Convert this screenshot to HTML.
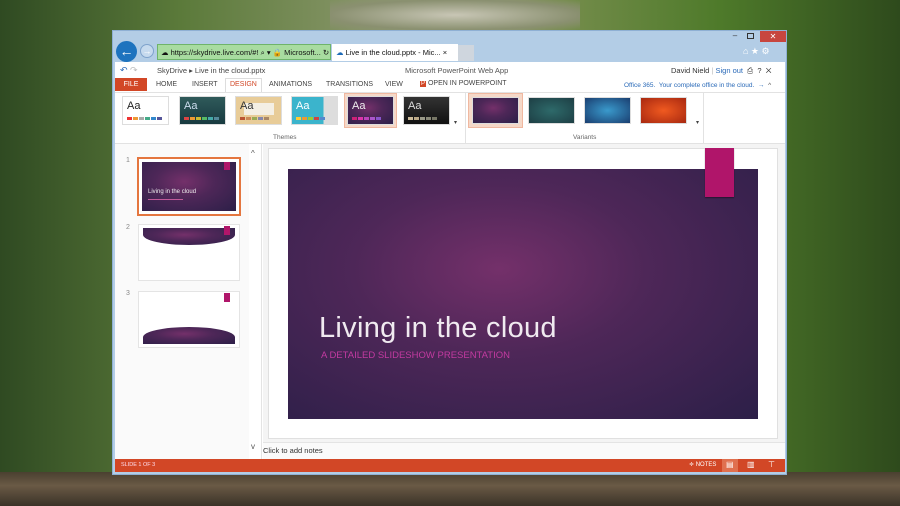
<!DOCTYPE html>
<html><head><meta charset="utf-8"><style>
*{margin:0;padding:0;box-sizing:border-box}
body{width:900px;height:506px;overflow:hidden;position:relative;font-family:"Liberation Sans",sans-serif;
background:linear-gradient(90deg,#2f4a22 0%,#5b7a3a 20%,#8f9a70 45%,#a9a890 50%,#7a8f50 60%,#4e7a2a 80%,#2e4a1c 100%);}
.bg2{position:absolute;left:0;right:0;bottom:0;height:34px;background:linear-gradient(180deg,#4a4030,#6a5a45 40%,#3a3228);}
.bgtop{position:absolute;left:330px;top:0;width:250px;height:30px;background:radial-gradient(ellipse at center,#c8c6b5,#8a9070 70%,transparent);}
.win{position:absolute;left:112px;top:30px;width:675px;height:445px;background:#b3cde6;border:1px solid #8fb0d4}
.abs{position:absolute}
.t{position:absolute;white-space:nowrap;font-size:7px;color:#444}
.th{position:absolute;top:65px;width:47px;height:29px;border:1px solid #ddd;overflow:hidden}
.sw{position:absolute;bottom:4px;left:4px;display:flex;gap:1px}
.sw i{display:block;width:5px;height:3px}
.slide{background:radial-gradient(ellipse at 45% 40%,#74306a 0%,#4e2758 40%,#2c1f48 100%)}
</style></head><body>
<div class="bgtop"></div><div class="bg2"></div>
<div class="win">
 <div class="abs" style="left:612px;top:0;width:20px;height:10px;font-size:8px;color:#333;text-align:center">‒</div>
 <div class="abs" style="left:634px;top:2px;width:7px;height:6px;border:1px solid #333"></div>
 <div class="abs" style="left:647px;top:0;width:26px;height:11px;background:#c7463f;color:#fff;font-size:8px;text-align:center;line-height:11px">✕</div>
 <div class="t" style="left:630px;top:15px;font-size:9px;color:#fff">⌂ ★ ⚙</div>
 <div class="abs" style="left:3px;top:10px;width:21px;height:21px;border-radius:50%;background:#1e73be;color:#fff;font-size:14px;text-align:center;line-height:20px;font-weight:bold">←</div>
 <div class="abs" style="left:27px;top:13px;width:14px;height:14px;border-radius:50%;border:1px solid #7fa3cc;background:#c6daee;color:#fff;font-size:9px;text-align:center;line-height:12px">→</div>
 <div class="abs" style="left:44px;top:13px;width:174px;height:16px;background:#a8dca0;border:1px solid #6fb46a"></div>
 <div class="t" style="left:48px;top:17px;font-size:7.5px;color:#111">☁ https://skydrive.live.com/#! ⌕ ▾ 🔒 Microsoft... ↻</div>
 <div class="abs" style="left:219px;top:13px;width:126px;height:17px;background:#fff"></div>
 <div class="t" style="left:223px;top:17px;font-size:7.5px;color:#111"><span style="color:#1e6bb8">☁</span> Live in the cloud.pptx - Mic... ×</div>
 <div class="abs" style="left:345px;top:14px;width:16px;height:16px;background:#cfd6de"></div>
 <div class="abs" style="left:2px;top:31px;width:670px;height:410px;background:#fff"></div>
 <div class="t" style="left:7px;top:34px;font-size:9px;color:#2a6ab8">↶ <span style="color:#bbb">↷</span></div>
 <div class="t" style="left:44px;top:35px;font-size:7.5px">SkyDrive ▸ Live in the cloud.pptx</div>
 <div class="t" style="left:292px;top:35px;font-size:7.5px;color:#555">Microsoft PowerPoint Web App</div>
 <div class="t" style="left:558px;top:35px;font-size:7.5px;color:#333">David Nield <span style="color:#bbb">|</span> <span style="color:#2a6ab8">Sign out</span> &nbsp;⎙ &nbsp;? &nbsp;✕</div>
 <div class="abs" style="left:2px;top:47px;width:32px;height:13px;background:#d24726;color:#fff;font-size:7px;text-align:center;line-height:13px">FILE</div>
 <div class="t" style="left:43px;top:50px">HOME</div>
 <div class="t" style="left:79px;top:50px">INSERT</div>
 <div class="abs" style="left:112px;top:47px;width:37px;height:14px;border:1px solid #ddd;border-bottom:none;background:#fff"></div>
 <div class="t" style="left:117px;top:50px;color:#d24726">DESIGN</div>
 <div class="t" style="left:156px;top:50px">ANIMATIONS</div>
 <div class="t" style="left:213px;top:50px">TRANSITIONS</div>
 <div class="t" style="left:272px;top:50px">VIEW</div>
 <div class="t" style="left:307px;top:49px"><span style="background:#d24726;color:#fff;font-size:6px;padding:0 1px">P</span> OPEN IN POWERPOINT</div>
 <div class="t" style="left:511px;top:51px;font-size:6.5px;color:#2a6ab8">Office 365. &nbsp;Your complete office in the cloud. &nbsp;→ &nbsp;<span style="color:#555">^</span></div>
 <div class="abs" style="left:2px;top:61px;width:670px;height:1px;background:#e2e2e2"></div>
 <div class="th" style="left:9px;background:#fff"><span class="t" style="left:4px;top:3px;font-size:11px;color:#222">Aa</span><div class="sw"><i style="background:#e33"></i><i style="background:#e93"></i><i style="background:#aaa"></i><i style="background:#4a8"></i><i style="background:#38c"></i><i style="background:#559"></i></div></div>
 <div class="th" style="left:66px;background:linear-gradient(#2f5a5a,#183a40)"><span class="t" style="left:4px;top:3px;font-size:11px;color:#cde">Aa</span><div class="sw"><i style="background:#d44"></i><i style="background:#e93"></i><i style="background:#cb3"></i><i style="background:#5b6"></i><i style="background:#4aa"></i><i style="background:#589"></i></div></div>
 <div class="th" style="left:122px;background:#e8cc98"><div class="abs" style="left:8px;top:6px;width:30px;height:12px;background:#f4efe4"></div><span class="t" style="left:4px;top:3px;font-size:11px;color:#333">Aa</span><div class="sw"><i style="background:#b53"></i><i style="background:#c85"></i><i style="background:#9a5"></i><i style="background:#88a"></i><i style="background:#a86"></i></div></div>
 <div class="th" style="left:178px;background:linear-gradient(90deg,#3bb4cc 70%,#ddd 70%)"><span class="t" style="left:4px;top:3px;font-size:11px;color:#fff">Aa</span><div class="sw"><i style="background:#fc3"></i><i style="background:#e93"></i><i style="background:#9c3"></i><i style="background:#c44"></i><i style="background:#58c"></i></div></div>
 <div class="abs" style="left:231px;top:62px;width:53px;height:35px;background:#f5d8c8;border:1px solid #f0b8a0"></div>
 <div class="th slide" style="left:234px"><span class="t" style="left:4px;top:3px;font-size:11px;color:#eee">Aa</span><div class="sw"><i style="background:#c27"></i><i style="background:#d3a"></i><i style="background:#b4b"></i><i style="background:#a5c"></i><i style="background:#85c"></i></div></div>
 <div class="th" style="left:290px;background:linear-gradient(#333,#111)"><span class="t" style="left:4px;top:3px;font-size:11px;color:#ddd">Aa</span><div class="sw"><i style="background:#cb9"></i><i style="background:#ba8"></i><i style="background:#998"></i><i style="background:#887"></i><i style="background:#776"></i></div></div>
 <div class="t" style="left:341px;top:88px;font-size:6px">▾</div>
 <div class="abs" style="left:352px;top:62px;width:1px;height:50px;background:#e2e2e2"></div>
 <div class="abs" style="left:355px;top:62px;width:55px;height:35px;background:#f5d8c8;border:1px solid #f0b8a0"></div>
 <div class="th slide" style="left:359px;top:66px;height:27px"></div>
 <div class="th" style="left:415px;top:66px;height:27px;background:radial-gradient(#2e6a6a,#1d3e44)"></div>
 <div class="th" style="left:471px;top:66px;height:27px;background:radial-gradient(#3a9acc,#1a3e70)"></div>
 <div class="th" style="left:527px;top:66px;height:27px;background:radial-gradient(#f05a20,#a82810)"></div>
 <div class="t" style="left:583px;top:88px;font-size:6px">▾</div>
 <div class="abs" style="left:590px;top:62px;width:1px;height:50px;background:#e2e2e2"></div>
 <div class="t" style="left:160px;top:103px;font-size:6.5px;color:#666">Themes</div>
 <div class="t" style="left:460px;top:103px;font-size:6.5px;color:#666">Variants</div>
 <div class="abs" style="left:2px;top:112px;width:670px;height:1px;background:#e2e2e2"></div>
 <div class="abs" style="left:2px;top:113px;width:134px;height:315px;background:#fafafa"></div>
 <div class="abs" style="left:136px;top:113px;width:13px;height:315px;background:#fff;border-right:1px solid #e4e4e4"></div>
 <div class="t" style="left:138px;top:118px;font-size:8px;color:#555">^</div>
 <div class="t" style="left:138px;top:411px;font-size:8px;color:#555">v</div>
 <div class="t" style="left:13px;top:126px;font-size:7px;color:#888">1</div>
 <div class="t" style="left:13px;top:193px;font-size:7px;color:#888">2</div>
 <div class="t" style="left:13px;top:259px;font-size:7px;color:#888">3</div>
 <div class="abs" style="left:24px;top:126px;width:104px;height:59px;border:2px solid #e4763f;background:#fff"></div>
 <div class="abs slide" style="left:29px;top:131px;width:94px;height:49px"></div>
 <div class="abs" style="left:111px;top:131px;width:6px;height:8px;background:#b0166a"></div>
 <div class="t" style="left:35px;top:158px;font-size:6px;color:#eee">Living in the cloud</div>
 <div class="abs" style="left:35px;top:168px;width:35px;height:1px;background:#c05a9a"></div>
 <div class="abs" style="left:25px;top:193px;width:102px;height:57px;border:1px solid #e4e4e4;background:#fff"></div>
 <div class="abs slide" style="left:30px;top:197px;width:92px;height:17px;border-radius:0 0 50% 50%/0 0 60% 60%"></div>
 <div class="abs" style="left:111px;top:195px;width:6px;height:9px;background:#b0166a"></div>
 <div class="abs" style="left:25px;top:260px;width:102px;height:57px;border:1px solid #e4e4e4;background:#fff"></div>
 <div class="abs slide" style="left:30px;top:296px;width:92px;height:17px;border-radius:50% 50% 0 0/60% 60% 0 0"></div>
 <div class="abs" style="left:111px;top:262px;width:6px;height:9px;background:#b0166a"></div>
 <div class="abs" style="left:150px;top:113px;width:522px;height:298px;background:#f4f4f4"></div>
 <div class="abs" style="left:155px;top:117px;width:510px;height:291px;background:#fff;border:1px solid #e0e0e0"></div>
 <div class="abs slide" style="left:175px;top:138px;width:470px;height:250px"></div>
 <div class="abs" style="left:592px;top:117px;width:29px;height:49px;background:#b0156a;box-shadow:0 1px 1px rgba(0,0,0,.4)"></div>
 <div class="t" style="left:206px;top:281px;font-size:29px;color:#f0eaf0;letter-spacing:0.3px">Living in the cloud</div>
 <div class="t" style="left:208px;top:319px;font-size:9.5px;color:#c23aa0">A DETAILED SLIDESHOW PRESENTATION</div>
 <div class="abs" style="left:150px;top:411px;width:522px;height:17px;background:#fafafa;border-top:1px solid #e4e4e4"></div>
 <div class="t" style="left:150px;top:415px;font-size:7.5px;color:#333">Click to add notes</div>
 <div class="abs" style="left:2px;top:428px;width:670px;height:13px;background:#d24726"></div>
 <div class="t" style="left:8px;top:431px;font-size:5.5px;color:#fde">SLIDE 1 OF 3</div>
 <div class="t" style="left:576px;top:430px;font-size:6px;color:#fff">≑ NOTES</div>
 <div class="abs" style="left:609px;top:428px;width:16px;height:13px;background:#e0704f"></div>
 <div class="t" style="left:613px;top:429px;font-size:8px;color:#fff">▤</div>
 <div class="t" style="left:634px;top:429px;font-size:8px;color:#fff">▥</div>
 <div class="t" style="left:655px;top:429px;font-size:8px;color:#fff">⊤</div>
</div>
</body></html>
